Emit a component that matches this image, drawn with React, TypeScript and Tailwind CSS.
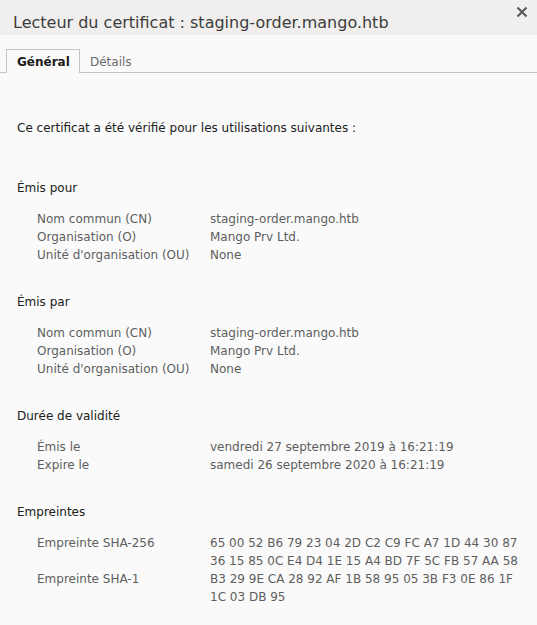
const SECTIONS: { title: string; rows: [string, string[]][] }[] = [
  {
    title: "Émis pour",
    rows: [
      ["Nom commun (CN)", ["staging-order.mango.htb"]],
      ["Organisation (O)", ["Mango Prv Ltd."]],
      ["Unité d'organisation (OU)", ["None"]],
    ],
  },
  {
    title: "Émis par",
    rows: [
      ["Nom commun (CN)", ["staging-order.mango.htb"]],
      ["Organisation (O)", ["Mango Prv Ltd."]],
      ["Unité d'organisation (OU)", ["None"]],
    ],
  },
  {
    title: "Durée de validité",
    rows: [
      ["Émis le", ["vendredi 27 septembre 2019 à 16:21:19"]],
      ["Expire le", ["samedi 26 septembre 2020 à 16:21:19"]],
    ],
  },
  {
    title: "Empreintes",
    rows: [
      [
        "Empreinte SHA-256",
        [
          "65 00 52 B6 79 23 04 2D C2 C9 FC A7 1D 44 30 87",
          "36 15 85 0C E4 D4 1E 15 A4 BD 7F 5C FB 57 AA 58",
        ],
      ],
      [
        "Empreinte SHA-1",
        ["B3 29 9E CA 28 92 AF 1B 58 95 05 3B F3 0E 86 1F", "1C 03 DB 95"],
      ],
    ],
  },
];

export default function App() {
  return (
    <div className="w-[537px] h-[625px] overflow-hidden bg-[#fafafa] font-['DejaVu_Sans',sans-serif]">
      {/* ── Title bar ── */}
      <div className="h-[35px] bg-[#f0efee] flex justify-between">
        <div className="pl-[13px] pt-[13px] text-[16px] leading-[20px] text-[#3c3c3c]">
          Lecteur du certificat : staging-order.mango.htb
        </div>
        <div className="pr-[8px] pt-[3px]">
          <svg width="12" height="12" viewBox="0 0 12 12" className="mt-[3px] mr-[1px]">
            <path d="M1.5 1.5 L10.5 10.5 M10.5 1.5 L1.5 10.5" stroke="#5c5c5c" strokeWidth="2.2" />
          </svg>
        </div>
      </div>

      {/* ── Tabs ── */}
      <div className="mt-[14px] flex border-b border-[#c6c6c6] pl-[6px] text-[12px] leading-[16px]">
        <div className="w-[74px] h-[24px] -mb-px border border-b-0 border-[#c6c6c6] bg-[#fafafa] pl-[10px] pt-[4px] font-bold text-[#1c1c1c]">
          Général
        </div>
        <div className="pl-[10px] pt-[5px] text-[#6a6a6a]">Détails</div>
      </div>

      {/* ── Body ── */}
      <div className="pl-[17px] pt-[46px] text-[12px] leading-[18px]">
        <div className="text-[#202020]">Ce certificat a été vérifié pour les utilisations suivantes :</div>
        <div className="mt-[42px] space-y-[29px]">
          {SECTIONS.map((s) => (
            <div key={s.title}>
              <div className="text-[#202020] mb-[13px]">{s.title}</div>
              <div className="pl-[20px] text-[#5e5e5e]">
                {s.rows.map(([label, values]) => (
                  <div key={label} className="flex">
                    <div className="w-[173px] shrink-0">{label}</div>
                    <div>
                      {values.map((v) => (
                        <div key={v}>{v}</div>
                      ))}
                    </div>
                  </div>
                ))}
              </div>
            </div>
          ))}
        </div>
      </div>
    </div>
  );
}
